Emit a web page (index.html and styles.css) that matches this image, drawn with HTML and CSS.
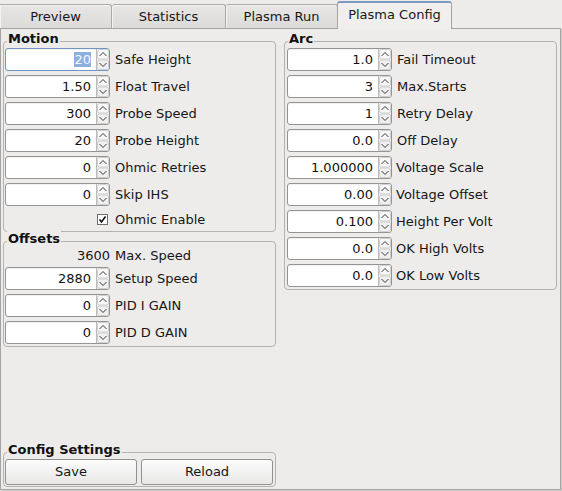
FILE: index.html
```html
<!DOCTYPE html>
<html>
<head>
<meta charset="utf-8">
<title>Plasma Config</title>
<link rel="stylesheet" href="styles.css">
</head>
<body>
<div class="window">
  <div class="tabbar">
    <div class="tab tab-preview">Preview</div>
    <div class="tab tab-stats">Statistics</div>
    <div class="tab tab-run">Plasma Run</div>
    <div class="tab active">Plasma Config</div>
  </div>
  <div class="pane">
    <div class="col">
      <div class="group motion">
        <div class="gtitle">Motion</div>
        <div class="row"><div class="spin focus"><div class="val"><span class="sel">20</span></div><div class="btns"><svg width="12" height="21" viewBox="0 0 12 21"><rect x="0.5" y="0.5" width="11" height="9.5" rx="2" fill="#f7f7f7" stroke="#cfcfcf"/><rect x="0.5" y="11" width="11" height="9.5" rx="2" fill="#f0f0f0" stroke="#cfcfcf"/><polyline points="2.5,7 6,3.5 9.5,7" fill="none" stroke="#3a3a3a"/><polyline points="2.5,14 6,17.5 9.5,14" fill="none" stroke="#3a3a3a"/></svg></div></div><span class="lbl">Safe Height</span></div>
        <div class="row"><div class="spin"><div class="val">1.50</div><div class="btns"><svg width="12" height="21" viewBox="0 0 12 21"><rect x="0.5" y="0.5" width="11" height="9.5" rx="2" fill="#f7f7f7" stroke="#cfcfcf"/><rect x="0.5" y="11" width="11" height="9.5" rx="2" fill="#f0f0f0" stroke="#cfcfcf"/><polyline points="2.5,7 6,3.5 9.5,7" fill="none" stroke="#3a3a3a"/><polyline points="2.5,14 6,17.5 9.5,14" fill="none" stroke="#3a3a3a"/></svg></div></div><span class="lbl">Float Travel</span></div>
        <div class="row"><div class="spin"><div class="val">300</div><div class="btns"><svg width="12" height="21" viewBox="0 0 12 21"><rect x="0.5" y="0.5" width="11" height="9.5" rx="2" fill="#f7f7f7" stroke="#cfcfcf"/><rect x="0.5" y="11" width="11" height="9.5" rx="2" fill="#f0f0f0" stroke="#cfcfcf"/><polyline points="2.5,7 6,3.5 9.5,7" fill="none" stroke="#3a3a3a"/><polyline points="2.5,14 6,17.5 9.5,14" fill="none" stroke="#3a3a3a"/></svg></div></div><span class="lbl">Probe Speed</span></div>
        <div class="row"><div class="spin"><div class="val">20</div><div class="btns"><svg width="12" height="21" viewBox="0 0 12 21"><rect x="0.5" y="0.5" width="11" height="9.5" rx="2" fill="#f7f7f7" stroke="#cfcfcf"/><rect x="0.5" y="11" width="11" height="9.5" rx="2" fill="#f0f0f0" stroke="#cfcfcf"/><polyline points="2.5,7 6,3.5 9.5,7" fill="none" stroke="#3a3a3a"/><polyline points="2.5,14 6,17.5 9.5,14" fill="none" stroke="#3a3a3a"/></svg></div></div><span class="lbl">Probe Height</span></div>
        <div class="row"><div class="spin"><div class="val">0</div><div class="btns"><svg width="12" height="21" viewBox="0 0 12 21"><rect x="0.5" y="0.5" width="11" height="9.5" rx="2" fill="#f7f7f7" stroke="#cfcfcf"/><rect x="0.5" y="11" width="11" height="9.5" rx="2" fill="#f0f0f0" stroke="#cfcfcf"/><polyline points="2.5,7 6,3.5 9.5,7" fill="none" stroke="#3a3a3a"/><polyline points="2.5,14 6,17.5 9.5,14" fill="none" stroke="#3a3a3a"/></svg></div></div><span class="lbl">Ohmic Retries</span></div>
        <div class="row"><div class="spin"><div class="val">0</div><div class="btns"><svg width="12" height="21" viewBox="0 0 12 21"><rect x="0.5" y="0.5" width="11" height="9.5" rx="2" fill="#f7f7f7" stroke="#cfcfcf"/><rect x="0.5" y="11" width="11" height="9.5" rx="2" fill="#f0f0f0" stroke="#cfcfcf"/><polyline points="2.5,7 6,3.5 9.5,7" fill="none" stroke="#3a3a3a"/><polyline points="2.5,14 6,17.5 9.5,14" fill="none" stroke="#3a3a3a"/></svg></div></div><span class="lbl">Skip IHS</span></div>
        <div class="row checkrow"><div class="field"><svg class="check" width="11" height="11" viewBox="0 0 11 11"><rect x="0.5" y="0.5" width="10" height="10" fill="#fff" stroke="#6e6e6e"/><polyline points="2.5,5.5 4.5,8 8.5,2.5" fill="none" stroke="#111" stroke-width="1.6"/></svg></div><span class="lbl">Ohmic Enable</span></div>
      </div>
      <div class="group offsets">
        <div class="gtitle">Offsets</div>
        <div class="row textrow"><div class="field num">3600</div><span class="lbl">Max. Speed</span></div>
        <div class="row"><div class="spin"><div class="val">2880</div><div class="btns"><svg width="12" height="21" viewBox="0 0 12 21"><rect x="0.5" y="0.5" width="11" height="9.5" rx="2" fill="#f7f7f7" stroke="#cfcfcf"/><rect x="0.5" y="11" width="11" height="9.5" rx="2" fill="#f0f0f0" stroke="#cfcfcf"/><polyline points="2.5,7 6,3.5 9.5,7" fill="none" stroke="#3a3a3a"/><polyline points="2.5,14 6,17.5 9.5,14" fill="none" stroke="#3a3a3a"/></svg></div></div><span class="lbl">Setup Speed</span></div>
        <div class="row"><div class="spin"><div class="val">0</div><div class="btns"><svg width="12" height="21" viewBox="0 0 12 21"><rect x="0.5" y="0.5" width="11" height="9.5" rx="2" fill="#f7f7f7" stroke="#cfcfcf"/><rect x="0.5" y="11" width="11" height="9.5" rx="2" fill="#f0f0f0" stroke="#cfcfcf"/><polyline points="2.5,7 6,3.5 9.5,7" fill="none" stroke="#3a3a3a"/><polyline points="2.5,14 6,17.5 9.5,14" fill="none" stroke="#3a3a3a"/></svg></div></div><span class="lbl">PID I GAIN</span></div>
        <div class="row"><div class="spin"><div class="val">0</div><div class="btns"><svg width="12" height="21" viewBox="0 0 12 21"><rect x="0.5" y="0.5" width="11" height="9.5" rx="2" fill="#f7f7f7" stroke="#cfcfcf"/><rect x="0.5" y="11" width="11" height="9.5" rx="2" fill="#f0f0f0" stroke="#cfcfcf"/><polyline points="2.5,7 6,3.5 9.5,7" fill="none" stroke="#3a3a3a"/><polyline points="2.5,14 6,17.5 9.5,14" fill="none" stroke="#3a3a3a"/></svg></div></div><span class="lbl">PID D GAIN</span></div>
      </div>
      <div class="spacer"></div>
      <div class="group config">
        <div class="gtitle">Config Settings</div>
        <div class="buttons">
          <div class="btn">Save</div>
          <div class="btn">Reload</div>
        </div>
      </div>
    </div>
    <div class="col">
      <div class="group arc">
        <div class="gtitle">Arc</div>
        <div class="row"><div class="spin"><div class="val">1.0</div><div class="btns"><svg width="12" height="21" viewBox="0 0 12 21"><rect x="0.5" y="0.5" width="11" height="9.5" rx="2" fill="#f7f7f7" stroke="#cfcfcf"/><rect x="0.5" y="11" width="11" height="9.5" rx="2" fill="#f0f0f0" stroke="#cfcfcf"/><polyline points="2.5,7 6,3.5 9.5,7" fill="none" stroke="#3a3a3a"/><polyline points="2.5,14 6,17.5 9.5,14" fill="none" stroke="#3a3a3a"/></svg></div></div><span class="lbl">Fail Timeout</span></div>
        <div class="row"><div class="spin"><div class="val">3</div><div class="btns"><svg width="12" height="21" viewBox="0 0 12 21"><rect x="0.5" y="0.5" width="11" height="9.5" rx="2" fill="#f7f7f7" stroke="#cfcfcf"/><rect x="0.5" y="11" width="11" height="9.5" rx="2" fill="#f0f0f0" stroke="#cfcfcf"/><polyline points="2.5,7 6,3.5 9.5,7" fill="none" stroke="#3a3a3a"/><polyline points="2.5,14 6,17.5 9.5,14" fill="none" stroke="#3a3a3a"/></svg></div></div><span class="lbl">Max.Starts</span></div>
        <div class="row"><div class="spin"><div class="val">1</div><div class="btns"><svg width="12" height="21" viewBox="0 0 12 21"><rect x="0.5" y="0.5" width="11" height="9.5" rx="2" fill="#f7f7f7" stroke="#cfcfcf"/><rect x="0.5" y="11" width="11" height="9.5" rx="2" fill="#f0f0f0" stroke="#cfcfcf"/><polyline points="2.5,7 6,3.5 9.5,7" fill="none" stroke="#3a3a3a"/><polyline points="2.5,14 6,17.5 9.5,14" fill="none" stroke="#3a3a3a"/></svg></div></div><span class="lbl">Retry Delay</span></div>
        <div class="row"><div class="spin"><div class="val">0.0</div><div class="btns"><svg width="12" height="21" viewBox="0 0 12 21"><rect x="0.5" y="0.5" width="11" height="9.5" rx="2" fill="#f7f7f7" stroke="#cfcfcf"/><rect x="0.5" y="11" width="11" height="9.5" rx="2" fill="#f0f0f0" stroke="#cfcfcf"/><polyline points="2.5,7 6,3.5 9.5,7" fill="none" stroke="#3a3a3a"/><polyline points="2.5,14 6,17.5 9.5,14" fill="none" stroke="#3a3a3a"/></svg></div></div><span class="lbl">Off Delay</span></div>
        <div class="row"><div class="spin"><div class="val">1.000000</div><div class="btns"><svg width="12" height="21" viewBox="0 0 12 21"><rect x="0.5" y="0.5" width="11" height="9.5" rx="2" fill="#f7f7f7" stroke="#cfcfcf"/><rect x="0.5" y="11" width="11" height="9.5" rx="2" fill="#f0f0f0" stroke="#cfcfcf"/><polyline points="2.5,7 6,3.5 9.5,7" fill="none" stroke="#3a3a3a"/><polyline points="2.5,14 6,17.5 9.5,14" fill="none" stroke="#3a3a3a"/></svg></div></div><span class="lbl tight">Voltage Scale</span></div>
        <div class="row"><div class="spin"><div class="val">0.00</div><div class="btns"><svg width="12" height="21" viewBox="0 0 12 21"><rect x="0.5" y="0.5" width="11" height="9.5" rx="2" fill="#f7f7f7" stroke="#cfcfcf"/><rect x="0.5" y="11" width="11" height="9.5" rx="2" fill="#f0f0f0" stroke="#cfcfcf"/><polyline points="2.5,7 6,3.5 9.5,7" fill="none" stroke="#3a3a3a"/><polyline points="2.5,14 6,17.5 9.5,14" fill="none" stroke="#3a3a3a"/></svg></div></div><span class="lbl tight">Voltage Offset</span></div>
        <div class="row"><div class="spin"><div class="val">0.100</div><div class="btns"><svg width="12" height="21" viewBox="0 0 12 21"><rect x="0.5" y="0.5" width="11" height="9.5" rx="2" fill="#f7f7f7" stroke="#cfcfcf"/><rect x="0.5" y="11" width="11" height="9.5" rx="2" fill="#f0f0f0" stroke="#cfcfcf"/><polyline points="2.5,7 6,3.5 9.5,7" fill="none" stroke="#3a3a3a"/><polyline points="2.5,14 6,17.5 9.5,14" fill="none" stroke="#3a3a3a"/></svg></div></div><span class="lbl tight">Height Per Volt</span></div>
        <div class="row"><div class="spin"><div class="val">0.0</div><div class="btns"><svg width="12" height="21" viewBox="0 0 12 21"><rect x="0.5" y="0.5" width="11" height="9.5" rx="2" fill="#f7f7f7" stroke="#cfcfcf"/><rect x="0.5" y="11" width="11" height="9.5" rx="2" fill="#f0f0f0" stroke="#cfcfcf"/><polyline points="2.5,7 6,3.5 9.5,7" fill="none" stroke="#3a3a3a"/><polyline points="2.5,14 6,17.5 9.5,14" fill="none" stroke="#3a3a3a"/></svg></div></div><span class="lbl tight">OK High Volts</span></div>
        <div class="row"><div class="spin"><div class="val">0.0</div><div class="btns"><svg width="12" height="21" viewBox="0 0 12 21"><rect x="0.5" y="0.5" width="11" height="9.5" rx="2" fill="#f7f7f7" stroke="#cfcfcf"/><rect x="0.5" y="11" width="11" height="9.5" rx="2" fill="#f0f0f0" stroke="#cfcfcf"/><polyline points="2.5,7 6,3.5 9.5,7" fill="none" stroke="#3a3a3a"/><polyline points="2.5,14 6,17.5 9.5,14" fill="none" stroke="#3a3a3a"/></svg></div></div><span class="lbl tight">OK Low Volts</span></div>
      </div>
    </div>
  </div>
</div>
</body>
</html>
```
FILE: styles.css
```css
* { box-sizing: border-box; }
html, body { margin: 0; padding: 0; }
body {
  width: 562px;
  height: 491px;
  overflow: hidden;
  background: #edeceb;
  font-family: "DejaVu Sans", "Noto Sans", sans-serif;
  font-size: 13px;
  color: #161616;
}
.window { display: flex; flex-direction: column; height: 491px; }

/* tabs */
.tabbar { display: flex; align-items: flex-end; height: 28px; flex: none; }
.tab {
  height: 24px;
  padding-top: 1px;
  line-height: 22px;
  text-align: center;
  background: linear-gradient(#e7e6e5, #dcdbda);
  border-top: 1px solid #aaa9a8;
  border-right: 1px solid #aaa9a8;
  border-radius: 3px 3px 0 0;
  box-shadow: inset 1px 1px 0 #f4f3f2;
}
.tab-preview { width: 112px; border-radius: 0 3px 0 0; }
.tab-stats { width: 114px; }
.tab-run { width: 112px; }
.tab.active {
  width: 115px;
  height: 28px;
  margin-left: -1px;
  margin-bottom: -1px;
  padding-top: 4px;
  line-height: 15px;
  background: #f0efee;
  border: 1px solid #a4a3a2;
  border-top: 2px solid #7d9ac2;
  border-bottom: none;
  box-shadow: none;
  position: relative;
  z-index: 1;
}

/* pane */
.pane {
  width: 561px;
  height: 462px;
  flex: none;
  display: flex;
  gap: 8px;
  padding: 12px 3px 2px 2px;
  border: 1px solid #a5a4a3;
  box-shadow: 1px 1px 0 #cfcecd;
}
.col { width: 273px; display: flex; flex-direction: column; }
.spacer { flex: 1; }

/* groups */
.group {
  position: relative;
  border: 1px solid #b4b3b2;
  border-radius: 4px;
  display: flex;
  flex-direction: column;
  gap: 4px;
}
.gtitle {
  position: absolute;
  top: -11px;
  left: 3px;
  padding: 0 1px;
  background: #edeceb;
  font-weight: bold;
  line-height: 15px;
  color: #111;
}
.motion { padding: 6px 2px 2px 1px; }
.offsets { margin-top: 9px; padding: 6px 2px 2px 1px; }
.config { padding: 6px 2px 1px 1px; }
.arc { padding: 6px 2px 2px 2px; }

/* rows */
.row { display: flex; align-items: center; gap: 5px; height: 23px; }
.checkrow { height: 19px; }
.textrow { height: 15px; }
.lbl { white-space: nowrap; }
.lbl.tight { margin-left: -1px; }
.field { width: 105px; flex: none; display: flex; justify-content: flex-end; padding-right: 2px; }
.field.num { padding-right: 0; line-height: 15px; }
.check { display: block; }

/* spin box */
.spin {
  width: 105px;
  height: 23px;
  flex: none;
  display: flex;
  background: #fff;
  border: 1px solid #959494;
  border-radius: 3px;
  box-shadow: inset 0 1px 1px rgba(0,0,0,0.06);
}
.spin.focus { border-color: #7393c2; }
.val {
  flex: 1;
  text-align: right;
  padding-right: 5px;
  line-height: 21px;
  color: #111;
  white-space: nowrap;
  overflow: hidden;
}
.sel { background: #8eb0de; color: #f4f8ff; }
.btns {
  width: 13px;
  flex: none;
  border-left: 1px solid #bdbcbb;
  border-radius: 0 2px 2px 0;
  background: linear-gradient(#f8f8f8, #e6e6e6);
  display: flex;
}
.btns svg { display: block; }

/* buttons */
.buttons { display: flex; gap: 4px; }
.btn {
  width: 132px;
  height: 26px;
  line-height: 24px;
  text-align: center;
  border: 1px solid #929191;
  border-radius: 3px;
  background: linear-gradient(#fdfdfd, #e8e7e6);
  color: #161616;
}
```
